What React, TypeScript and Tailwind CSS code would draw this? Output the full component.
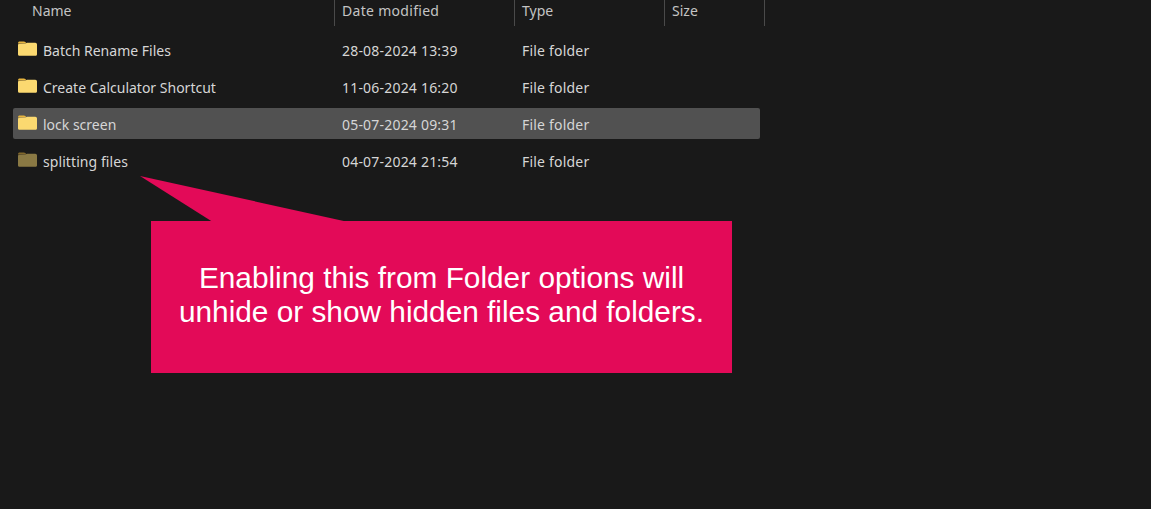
const rows = [
  { name: 'Batch Rename Files', date: '28-08-2024 13:39' },
  { name: 'Create Calculator Shortcut', date: '11-06-2024 16:20' },
  { name: 'lock screen', date: '05-07-2024 09:31', selected: true },
  { name: 'splitting files', date: '04-07-2024 21:54', hidden: true },
];

function FolderIcon({ hidden }: { hidden?: boolean }) {
  return (
    <svg width="19" height="15" viewBox="0 0 19 15" className={hidden ? 'opacity-50' : ''}>
      <path d="M0 2.2C0 1.2.8.5 1.7.5h4.200c.6 0 1 .2 1.400.6L8.600 2.600H0z" fill="#e8b53e" />
      <path d="M0 4c0-.7.5-1.300 1.200-1.300l6.300-.1 1.500-.9h8.300c.9 0 1.700.8 1.700 1.700v9.800c0 .9-.8 1.600-1.700 1.600H1.700C.8 14.800 0 14.100 0 13.200z" fill="#fbd970" />
    </svg>
  );
}

export default function App() {
  return (
    <main className="relative h-[509px] w-[1151px] overflow-hidden bg-[#191919] font-['Noto_Sans',sans-serif] text-[14px] text-[#d6d6d6]">
      <div className="flex h-[26px] w-[765px] text-[#c4c4c4]">
        <div className="w-[335px] border-r border-[#4a4a4a] pl-[32px] leading-[21px]">Name</div>
        <div className="w-[180px] border-r border-[#4a4a4a] pl-[7px] leading-[21px] tracking-[0.3px]">Date modified</div>
        <div className="w-[150px] border-r border-[#4a4a4a] pl-[7px] leading-[21px]">Type</div>
        <div className="w-[100px] border-r border-[#4a4a4a] pl-[7px] leading-[21px]">Size</div>
      </div>

      <div className="ml-[13px] mt-[8px] flex w-[747px] flex-col gap-[6px]">
        {rows.map((row) => (
          <div
            key={row.name}
            className={`flex h-[31px] items-center rounded-[2px] pt-[2px] ${row.selected ? 'bg-[#515151]' : ''}`}
          >
            <div className="flex w-[321px] items-center gap-[6px] pl-[5px]">
              <div className="-mt-[4px] flex">
                <FolderIcon hidden={row.hidden} />
              </div>
              <span className={row.hidden ? 'tracking-[0.08px]' : ''}>{row.name}</span>
            </div>
            <div className="w-[180px] pl-[8px] tracking-[0.2px]">{row.date}</div>
            <div className="pl-[8px] tracking-[0.2px]">File folder</div>
          </div>
        ))}
      </div>

      {/* callout pasted over the list */}
      <div className="absolute left-[151px] top-[221px] flex h-[152px] w-[581px] flex-col items-center bg-[#e30a58] pt-[40px] text-center font-['Liberation_Sans',sans-serif] text-[29.8px] leading-[34px] text-white">
        <div>Enabling this from Folder options will</div>
        <div>unhide or show hidden files and folders.</div>
      </div>
      <svg className="absolute left-[140px] top-[176px]" width="206" height="46" viewBox="0 0 206 46">
        <path d="M0 0L72 45.500H206Z" fill="#e30a58" />
      </svg>
    </main>
  );
}
